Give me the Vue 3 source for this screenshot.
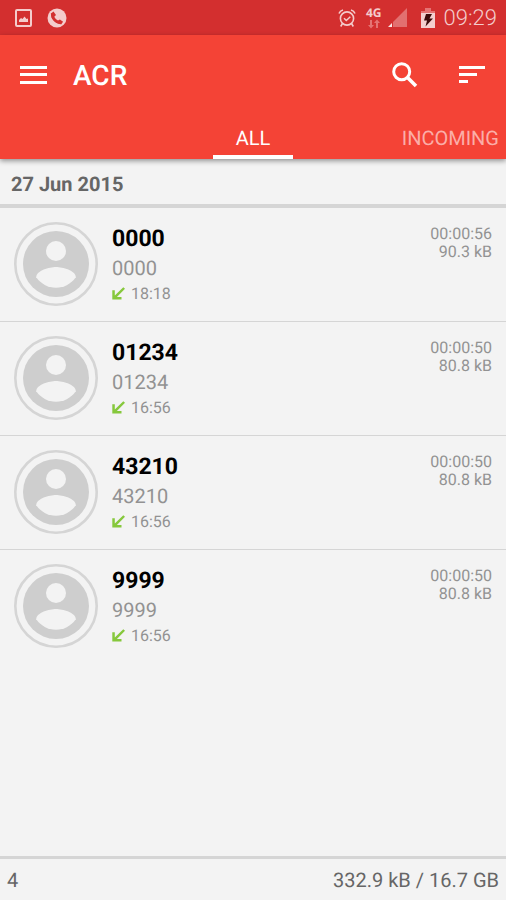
<script setup>
const date = '27 Jun 2015'
const calls = [
  { name: '0000', number: '0000', time: '18:18', duration: '00:00:56', size: '90.3 kB' },
  { name: '01234', number: '01234', time: '16:56', duration: '00:00:50', size: '80.8 kB' },
  { name: '43210', number: '43210', time: '16:56', duration: '00:00:50', size: '80.8 kB' },
  { name: '9999', number: '9999', time: '16:56', duration: '00:00:50', size: '80.8 kB' },
]
</script>

<template>
  <div class="app">
    <div class="status">
      <svg class="photo" width="17" height="18" viewBox="0 0 17 18" aria-hidden="true">
        <rect x="1" y="1" width="15" height="16" rx="1" fill="none" stroke="currentColor" stroke-width="2" />
        <path d="M4 13v-2l2-2 1.500 1 2-2.500 2 2.500 1.500-.5V13z" fill="currentColor" />
      </svg>
      <svg class="phone" width="20" height="20" viewBox="0 0 20 20" aria-hidden="true">
        <circle cx="10" cy="10" r="9.500" fill="currentColor" />
        <path d="M4.500 5.500C4.500 11 9 15.500 14.300 15.600" fill="none" stroke="#d32f2f" stroke-width="1.500" />
        <path d="M4 5.500 6.500 3.500 9 7 7.300 8.700c.9 1.700 2 2.900 3.700 3.900l1.900-1.200 3.200 2.400-1.900 2.400C8.500 16 3.800 11 4 5.500z" fill="#d32f2f" />
      </svg>
      <div class="indicators">
        <svg class="alarm" width="18" height="20" viewBox="0 0 18 20" fill="none" stroke="currentColor" aria-hidden="true">
          <circle cx="9" cy="10.500" r="6.600" stroke-width="1.600" />
          <path d="m6 10.200 2.300 2.300 4-3.700" stroke-width="1.500" />
          <path d="M1 5.500Q2 2.800 5 2M17 5.500Q16 2.800 13 2M4.500 15.500 2.700 18.500M13.500 15.500l1.800 3" stroke-width="1.600" />
        </svg>
        <div class="network">
          <span>4G</span>
          <svg width="12" height="10" viewBox="0 0 12 10" aria-hidden="true">
            <path d="M2 1h2v5h2L3 9.500 0 6h2zM8 9h2V4h2L9 .5 6 4h2z" fill="#e57373" />
          </svg>
        </div>
        <svg class="signal" width="19" height="19" viewBox="0 0 19 19" aria-hidden="true">
          <path d="M19 0v19H5V14z" fill="#e27070" />
          <path d="M4 15v4H0z" fill="#fbe9e7" />
        </svg>
        <svg class="battery" width="14" height="20" viewBox="0 0 14 20" aria-hidden="true">
          <path d="M4 0h6v3h4v3H0V3h4z" fill="#e57373" />
          <path d="M0 5h14v15H0z" fill="#f4cfcf" />
          <path d="M5 6h6L8.500 10.500H12L4.500 18.500 6 12.500H3z" fill="#3c0b0b" />
        </svg>
        <time>09:29</time>
      </div>
    </div>

    <header>
      <div class="toolbar">
        <button type="button" aria-label="Menu">
          <svg width="28" height="20" viewBox="0 0 28 20"><path d="M0 1h27v3H0zM0 8h27v3H0zM0 16h27v3H0z" fill="#fff" /></svg>
        </button>
        <h1>ACR</h1>
        <button type="button" class="search" aria-label="Search">
          <svg width="26" height="26" viewBox="0 0 26 26" fill="none" stroke="#fff">
            <circle cx="9.700" cy="9.700" r="8" stroke-width="3" />
            <path d="m15.500 15.500 8.500 8.500" stroke-width="3.500" />
          </svg>
        </button>
        <button type="button" aria-label="Sort">
          <svg width="26" height="18" viewBox="0 0 26 18"><path d="M0 0h26v3H0zM0 7h18v3H0zM0 14h9v3H0z" fill="#fff" /></svg>
        </button>
      </div>
      <nav>
        <a href="#all" class="active" aria-current="page">ALL</a>
        <a href="#incoming">INCOMING</a>
      </nav>
    </header>

    <main>
      <h2>{{ date }}</h2>
      <ul>
        <li v-for="call in calls" :key="call.name">
          <svg class="avatar" width="84" height="84" viewBox="0 0 84 84" aria-hidden="true">
            <circle cx="42" cy="42" r="40.700" fill="none" stroke="#d5d5d5" stroke-width="2.600" />
            <circle cx="42" cy="42" r="33" fill="#cecece" />
            <circle cx="42" cy="29" r="10" fill="#f3f3f3" />
            <path d="M22.200 55.200C22.300 48.600 35.400 45 42 45s19.700 3.600 19.800 10.200a23.800 23.800 0 0 1-39.600 0z" fill="#f3f3f3" />
          </svg>
          <div class="who">
            <strong>{{ call.name }}</strong>
            <span class="number">{{ call.number }}</span>
            <span class="time">
              <svg width="14" height="14" viewBox="0 0 14 14" aria-label="Incoming" role="img">
                <path d="M11.300.2 13 1.800 4.900 10H9.500v2.500H.3V3.300h2.500v5.200z" fill="#86c83c" />
              </svg>
              {{ call.time }}
            </span>
          </div>
          <div class="meta">
            <span>{{ call.duration }}</span>
            <span>{{ call.size }}</span>
          </div>
        </li>
      </ul>
    </main>

    <footer>
      <span>4</span>
      <span>332.9 kB / 16.7 GB</span>
    </footer>
  </div>
</template>

<style>
body {
  background: #f3f3f3;
}
</style>

<style scoped>
* {
  box-sizing: border-box;
}
.app {
  min-height: 100vh;
  display: flex;
  flex-direction: column;
  background: #f3f3f3;
  font-family: Roboto, sans-serif;
  text-rendering: geometricPrecision;
  color: #929292;
}
svg {
  display: block;
  flex: none;
}
.status {
  height: 35px;
  display: flex;
  align-items: center;
  gap: 15px;
  padding: 0 9px 0 15px;
  background: #d32f2f;
  color: #f4cccc;
}
.indicators {
  margin-left: auto;
  display: flex;
  align-items: center;
}
.network {
  display: flex;
  flex-direction: column;
  align-items: center;
  margin: 0 6px 0 10px;
  font: 700 12px/12px "Open Sans", sans-serif;
}
.battery {
  margin: 0 9px 0 14px;
}
.indicators time {
  font-size: 22px;
  font-weight: 300;
  line-height: 35px;
  padding-top: 2px;
}
header {
  position: relative;
  background: #f44336;
  box-shadow: 0 2px 5px rgba(0, 0, 0, 0.4);
}
.toolbar {
  height: 80px;
  display: flex;
  align-items: center;
  padding: 0 21px 0 20px;
}
button {
  padding: 0;
  border: 0;
  background: none;
}
h1 {
  margin: 0 auto 0 25px;
  padding-top: 2px;
  font-size: 28px;
  font-weight: 500;
  line-height: 32px;
  color: #fff;
}
.search {
  margin-right: 41px;
}
nav {
  display: grid;
  grid-template-columns: 1fr 80px 1fr;
  height: 44px;
}
nav a {
  justify-self: end;
  padding: 11px 7px 0 0;
  font-size: 20px;
  line-height: 24px;
  color: #fbaea8;
  text-decoration: none;
}
nav .active {
  grid-column: 2;
  justify-self: stretch;
  padding-right: 0;
  border-bottom: 4px solid #fff;
  color: #fff;
  text-align: center;
}
main {
  flex: 1;
}
h2 {
  margin: 0;
  padding: 13px 11px 8px;
  border-bottom: 4px solid #d5d5d5;
  font-size: 20px;
  font-weight: 700;
  line-height: 24px;
  color: #666;
}
ul {
  margin: 0;
  padding: 0;
  list-style: none;
}
li {
  display: flex;
  align-items: flex-start;
  padding: 14px 14px 15px;
  border-bottom: 1px solid #d5d5d5;
}
li:last-child {
  border-bottom: 0;
}
.who {
  flex: 1;
  display: flex;
  flex-direction: column;
  margin-left: 14px;
}
strong {
  padding-top: 1px;
  font-size: 23px;
  line-height: 32px;
  font-weight: 700;
  color: #000;
}
.number {
  font-size: 20px;
  line-height: 27px;
}
.time {
  display: flex;
  align-items: center;
  gap: 5px;
  font-size: 16px;
  line-height: 24px;
}
.meta {
  display: flex;
  flex-direction: column;
  align-items: flex-end;
  padding-top: 3px;
  font-size: 16px;
  line-height: 18px;
}
footer {
  display: flex;
  justify-content: space-between;
  padding: 11px 7px 9px;
  border-top: 3px solid #d5d5d5;
  font-size: 20px;
  line-height: 21px;
  color: #666;
}
</style>
